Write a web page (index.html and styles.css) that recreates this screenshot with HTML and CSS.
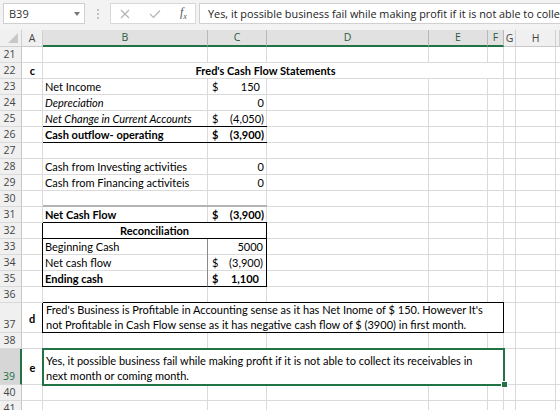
FILE: index.html
```html
<!DOCTYPE html>
<html lang="en">
<head>
  <meta charset="UTF-8" />
  <title>Fred's Cash Flow - Sheet</title>
  <link rel="stylesheet" href="styles.css">
</head>
<body>
  <div class="fbar">
    <div class="namebox">B39<span class="caret"></span></div>
    <div class="grip"><i></i><i></i><i></i></div>
    <div class="fbtns">
      <svg width="10" height="10" viewBox="0 0 10 10"><path d="M1 1 L9 9 M9 1 L1 9" stroke="#b4b4b4" stroke-width="1.2" fill="none"/></svg>
      <svg width="12" height="10" viewBox="0 0 12 10"><path d="M1 5 L4.5 8.5 L11 1.5" stroke="#b4b4b4" stroke-width="1.2" fill="none"/></svg>
      <span class="fx">f<sub>x</sub></span>
    </div>
    <div class="fedit">Yes, it possible business fail while making profit if it is not able to collect its receivables in next month or coming month.</div>
  </div>

  <div class="sheet">
    <div class="row hdr">
      <div class="corner"><span class="tri"></span></div>
      <div class="ch">A</div>
      <div class="ch sel">B</div>
      <div class="ch sel">C</div>
      <div class="ch sel">D</div>
      <div class="ch sel">E</div>
      <div class="ch sel">F</div>
      <div class="ch">G</div>
      <div class="ch">H</div>
      <div class="ch"></div>
    </div>

    <div class="row"><div class="rh">21</div></div>
    <div class="row">
      <div class="rh">22</div>
      <div class="cell a lbl">c</div>
      <div class="cell be title">Fred's Cash Flow Statements</div>
    </div>
    <div class="row">
      <div class="rh">23</div>
      <div class="cell b">Net Income</div>
      <div class="cell c num"><span>$</span><span class="pos">150</span></div>
    </div>
    <div class="row">
      <div class="rh">24</div>
      <div class="cell b it">Depreciation</div>
      <div class="cell c num end"><span>0</span></div>
    </div>
    <div class="row">
      <div class="rh">25</div>
      <div class="cell b it bb">Net Change in Current Accounts</div>
      <div class="cell c num bb"><span>$</span><span>(4,050)</span></div>
    </div>
    <div class="row">
      <div class="rh">26</div>
      <div class="cell b bold bb">Cash outflow- operating</div>
      <div class="cell c num bold bb"><span>$</span><span>(3,900)</span></div>
    </div>
    <div class="row"><div class="rh">27</div></div>
    <div class="row">
      <div class="rh">28</div>
      <div class="cell b">Cash from Investing activities</div>
      <div class="cell c num end"><span>0</span></div>
    </div>
    <div class="row">
      <div class="rh">29</div>
      <div class="cell b">Cash from Financing activiteis</div>
      <div class="cell c num end"><span>0</span></div>
    </div>
    <div class="row">
      <div class="rh">30</div>
      <div class="cell b bg2"></div>
      <div class="cell c bg2"></div>
    </div>
    <div class="row">
      <div class="rh">31</div>
      <div class="cell b bold bb">Net Cash Flow</div>
      <div class="cell c num bold bb"><span>$</span><span>(3,900)</span></div>
    </div>
    <div class="row">
      <div class="rh">32</div>
      <div class="cell a br"></div>
      <div class="cell bc bold center merged br bb">Reconciliation</div>
    </div>
    <div class="row">
      <div class="rh">33</div>
      <div class="cell a br"></div>
      <div class="cell b brg">Beginning Cash</div>
      <div class="cell c num end br"><span>5000</span></div>
    </div>
    <div class="row">
      <div class="rh">34</div>
      <div class="cell a br"></div>
      <div class="cell b brg">Net cash flow</div>
      <div class="cell c num br"><span>$</span><span>(3,900)</span></div>
    </div>
    <div class="row">
      <div class="rh">35</div>
      <div class="cell a br"></div>
      <div class="cell b bold brg bb">Ending cash</div>
      <div class="cell c num bold br bb"><span>$</span><span class="pos">1,100</span></div>
    </div>
    <div class="row">
      <div class="rh">36</div>
      <div class="cell bf bb"></div>
    </div>
    <div class="row tall37">
      <div class="rh">37</div>
      <div class="cell a lbl mid br">d</div>
      <div class="cell bf merged wrap br bb">Fred's Business is Profitable in Accounting sense as it has Net Inome of $ 150. However It's not Profitable in Cash Flow sense as it has negative cash flow of $ (3900) in first month.</div>
    </div>
    <div class="row"><div class="rh">38</div></div>
    <div class="row tall39">
      <div class="rh sel">39</div>
      <div class="cell a lbl mid">e</div>
      <div class="cell bf merged wrap active">Yes, it possible business fail while making profit if it is not able to collect its receivables in next month or coming month.</div>
    </div>
    <div class="row"><div class="rh">40</div></div>
    <div class="row"><div class="rh">41</div></div>
  </div>
</body>
</html>
```

FILE: styles.css
```css
html, body {
  margin: 0;
  padding: 0;
  height: 100%;
  overflow: hidden;
  background: #fff;
  font-family: 'Lato', sans-serif;
  color: #000;
}

/* formula bar */
.fbar {
  height: 30px;
  background: #f3f3f3;
  display: flex;
  align-items: flex-start;
  padding: 3px 0 0 3px;
  box-sizing: border-box;
  font-family: 'Open Sans', sans-serif;
}

.namebox {
  width: 82px;
  height: 21px;
  box-sizing: border-box;
  background: #fff;
  border: 1px solid #d0d0d0;
  display: flex;
  align-items: center;
  justify-content: space-between;
  padding: 0 4px 0 5px;
  font-size: 11px;
  color: #333;
}

.caret {
  width: 0;
  height: 0;
  border-left: 3.5px solid transparent;
  border-right: 3.5px solid transparent;
  border-top: 4px solid #777;
}

.grip {
  width: 24px;
  height: 21px;
  display: flex;
  flex-direction: column;
  align-items: center;
  justify-content: center;
  gap: 2px;
  margin-left: 1px;
}

.grip i {
  width: 2px;
  height: 2px;
  background: #c2c2c2;
}

.fbtns {
  width: 86px;
  height: 21px;
  box-sizing: border-box;
  background: #fff;
  border: 1px solid #d8d8d8;
  display: flex;
  align-items: center;
  gap: 19px;
  padding-left: 9px;
}

.fx {
  font-family: 'Liberation Serif', serif;
  font-style: italic;
  font-size: 12px;
  color: #555;
}

.fx sub {
  font-size: 8px;
}

.fedit {
  flex: 1;
  height: 21px;
  box-sizing: border-box;
  margin-left: 3px;
  background: #fff;
  border: 1px solid #d0d0d0;
  border-right: none;
  padding: 0 0 0 8px;
  font-size: 10.85px;
  line-height: 19px;
  white-space: nowrap;
  overflow: hidden;
  color: #222;
}

/* sheet grid */
.row {
  display: grid;
  grid-template-columns: 22px 21px 165px 59px 162px 59px 16px 12px 40px 1fr;
  grid-template-rows: minmax(0, 1fr);
  height: 16px;
  background:
    linear-gradient(0deg, #dadada 1px, transparent 1px),
    linear-gradient(90deg, transparent 42px, #dadada 42px 43px, transparent 43px 207px,
      #dadada 207px 208px, transparent 208px 266px, #dadada 266px 267px,
      transparent 267px 428px, #dadada 428px 429px, transparent 429px 487px,
      #dadada 487px 488px, transparent 488px 503px, #dadada 503px 504px,
      transparent 504px 515px, #dadada 515px 516px, transparent 516px 555px,
      #dadada 555px 556px, transparent 556px);
  font-size: 11px;
}

.tall37 { height: 30px; }
.tall39 { height: 36px; }

.hdr {
  height: 17px;
  background: #f0f0f0;
}

.corner {
  position: relative;
  border-right: 1px solid #d0d0d0;
  border-bottom: 1px solid #d0d0d0;
}

.tri {
  position: absolute;
  right: 3px;
  bottom: 3px;
  width: 0;
  height: 0;
  border-left: 10px solid transparent;
  border-bottom: 10px solid #c8c8c8;
}

.ch {
  border-right: 1px solid #d0d0d0;
  border-bottom: 1px solid #c8c8c8;
  text-align: center;
  font-family: 'Open Sans', sans-serif;
  font-size: 10.5px;
  line-height: 16px;
  color: #444;
}

.ch.sel {
  background: #e1e1e1;
  border-right-color: #b8b8b8;
  border-bottom: 2px solid #217346;
  line-height: 15px;
  color: #2b5a3e;
}

.rh {
  grid-column: 1;
  box-sizing: border-box;
  background: #f0f0f0;
  border-right: 1px solid #c8c8c8;
  border-bottom: 1px solid #dadada;
  font-family: 'Open Sans', sans-serif;
  font-size: 10.5px;
  color: #444;
  display: flex;
  align-items: flex-end;
  justify-content: center;
  line-height: 15px;
  padding-right: 2px;
}

.rh.sel {
  background: #d6d6d6;
  color: #217346;
  border-right: 2px solid #217346;
}

/* cells */
.cell {
  box-sizing: border-box;
  line-height: 15px;
  padding: 0 2px;
  white-space: nowrap;
  position: relative;
  min-height: 0;
}

.a { grid-column: 2; }
.b { grid-column: 3; }
.c { grid-column: 4; }
.bc { grid-column: 3 / 5; }
.be { grid-column: 3 / 7; }
.bf { grid-column: 3 / 8; }

.lbl {
  font-weight: bold;
  text-align: center;
  padding: 0;
}

.mid {
  display: flex;
  align-items: center;
  justify-content: center;
}

.title {
  font-weight: bold;
  text-align: center;
  background: #fff;
  border-bottom: 1px solid #dadada;
}

.bold { font-weight: bold; }
.it { font-style: italic; }
.center { text-align: center; }
.merged { background: #fff; }

.num {
  display: flex;
  justify-content: space-between;
  padding: 0 3px 0 4px;
}

.num.end { justify-content: flex-end; }
.pos { padding-right: 4px; }

.bb { border-bottom: 1px solid #000; }
.br { border-right: 1px solid #000; }
.brg { border-right: 1px solid #8a8a8a; }
.bg2 { border-bottom: 2px solid #b4b4b4; }

.wrap {
  white-space: normal;
  display: flex;
  align-items: flex-end;
  padding: 0 14px 0 3px;
}

.active {
  outline: 2px solid #217346;
  outline-offset: -1px;
  border-bottom: 1px solid #dadada;
  padding-bottom: 1px;
}

.active::after {
  content: "";
  position: absolute;
  right: -4px;
  bottom: -4px;
  width: 5px;
  height: 5px;
  background: #217346;
  border: 1px solid #fff;
}
```
